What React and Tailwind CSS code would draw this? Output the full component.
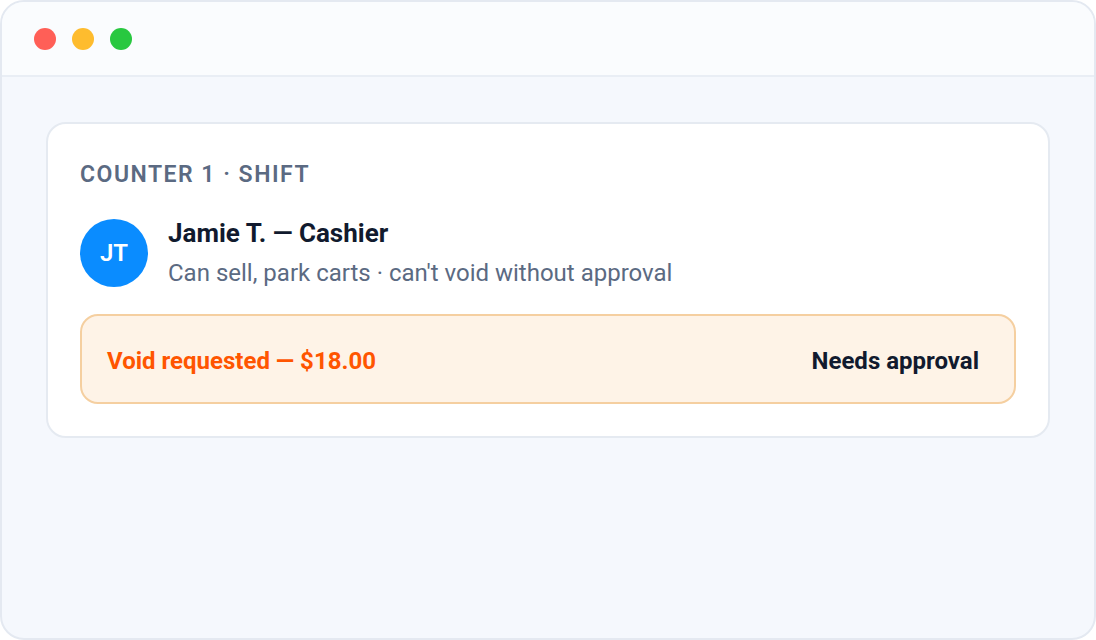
export default function App() {
  return (
    <div className="w-[1096px] h-[640px] bg-white" style={{ fontFamily: "Roboto, 'Noto Sans', sans-serif" }}>
      <div className="w-full h-full rounded-[24px] border-2 border-[#e4e9f1] bg-[#f5f8fd] overflow-hidden flex flex-col">
        <div className="h-[75px] shrink-0 bg-[#fafcfe] border-b-2 border-[#e9eef5] flex items-center gap-4 pl-[32px]">
          <span className="w-[22px] h-[22px] rounded-full bg-[#ff5f57]" />
          <span className="w-[22px] h-[22px] rounded-full bg-[#febc2e]" />
          <span className="w-[22px] h-[22px] rounded-full bg-[#28c840]" />
        </div>
        <div className="px-[44px] pt-[45px]">
          <div className="bg-white rounded-[20px] border-2 border-[#e5eaf1] px-[32px] pt-[34px] pb-[32px]">
            <div className="text-[23px] leading-[34px] font-semibold tracking-[0.065em] text-[#5b6a82]">COUNTER 1 · SHIFT</div>
            <div className="flex items-center gap-5 mt-[25px]">
              <div className="w-[68px] h-[68px] rounded-full bg-[#0a8cff] flex items-center justify-center text-white text-[24px] font-semibold">JT</div>
              <div className="flex flex-col gap-[8px]">
                <div className="text-[26px] leading-[32px] font-bold text-[#111a2e]">Jamie T. — Cashier</div>
                <div className="text-[24px] leading-[32px] text-[#5b6a82]">Can sell, park carts · can't void without approval</div>
              </div>
            </div>
            <div className="mt-[25px] h-[90px] rounded-[18px] border-2 border-[#f5cfa0] bg-[#fef3e7] flex items-center justify-between pl-[25px] pr-[35px] pt-[3px]">
              <span className="text-[24px] font-bold text-[#ff5500]">Void requested — $18.00</span>
              <span className="text-[24px] font-bold text-[#111a2e]">Needs approval</span>
            </div>
          </div>
        </div>
      </div>
    </div>
  );
}
